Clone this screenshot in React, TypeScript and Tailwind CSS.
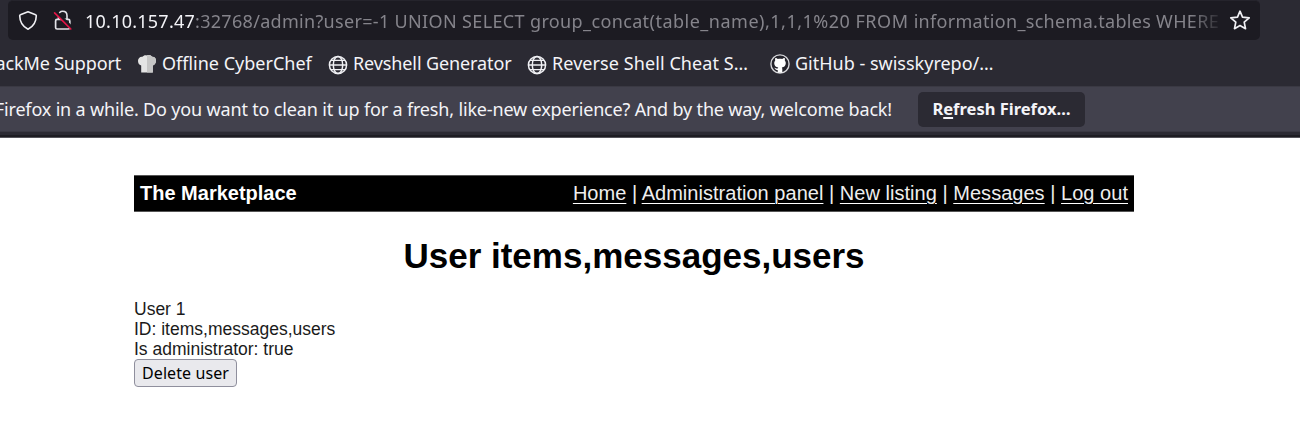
import type { ReactNode } from "react";

function Shield() {
  return (
    <svg className="size-[22px]" viewBox="0 0 22 22" fill="none" stroke="#f0f0f4" strokeWidth="1.6" strokeLinejoin="round">
      <path d="M11 1.800 L18.600 4.700 C19.200 4.900 19.300 5.300 19.300 5.800 C19.200 11.800 16.500 16.500 11 19.300 C5.500 16.500 2.800 11.800 2.700 5.800 C2.700 5.300 2.800 4.900 3.400 4.700 Z" />
    </svg>
  );
}

function BrokenLock() {
  return (
    <svg className="size-[22px]" viewBox="0 0 22 22" fill="none">
      <path d="M6.500 9V5.800C6.500 3.100 8.200 1.300 10.700 1.300S15 3.100 15 5.800V9" stroke="#e3e3e8" strokeWidth="1.600" />
      <rect x="3.600" y="9.400" width="14.200" height="9.600" rx="1.500" stroke="#e3e3e8" strokeWidth="1.700" />
      <path d="M4.200 2.200L20 18" stroke="#1c1b22" strokeWidth="3.200" />
      <path d="M2.600 2.800L18.800 19" stroke="#e31547" strokeWidth="1.700" strokeLinecap="round" />
    </svg>
  );
}

function Star() {
  return (
    <svg className="size-[22px]" viewBox="0 0 22 22" fill="none" stroke="#f0f0f4" strokeWidth="1.700" strokeLinejoin="round">
      <path d="M11 1.200L13.500 7.100L20.200 7.800L15.200 12.200L16.500 18.700L11 15.600L5.500 18.700L6.800 12.200L1.800 7.800L8.500 7.100Z" />
    </svg>
  );
}

function Globe() {
  return (
    <svg className="mt-[2px] size-5 shrink-0" viewBox="0 0 20 20" fill="none" stroke="#f0f0f4" strokeWidth="1.500">
      <circle cx="10" cy="10" r="8.600" />
      <ellipse cx="10" cy="10" rx="4.700" ry="8.600" />
      <path d="M1.400 10H18.600M3 5.400H17M3 14.600H17" strokeWidth="1.300" />
    </svg>
  );
}

function ChefHat() {
  return (
    <svg className="size-5 shrink-0" viewBox="0 0 20 20">
      <path d="M4.200 18.500V11.500C1.800 10.800 1 9 1 6.800C1 4.200 3 2.400 5.400 2.700C6.500 1.200 8.300.8 10 1.400C12 .6 14 1.200 15 2.700C17.400 2.500 19 4.200 19 6.600C19 9 18 10.800 15.800 11.500V18.500Z" fill="#e4e4e4" />
      <path d="M10 1.400C12 .6 14 1.200 15 2.700C17.400 2.500 19 4.200 19 6.600C19 9 18 10.800 15.800 11.500V18.500H10Z" fill="#c6c6c6" />
    </svg>
  );
}

function GitHubMark() {
  return (
    <svg className="mt-px size-5 shrink-0" viewBox="0 0 20 20">
      <circle cx="10" cy="10" r="9.100" fill="#24232b" stroke="#d6d6da" strokeWidth="1.400" />
      <path d="M7.700 18.800V15.900C5.700 16.300 5.200 15 4.700 14.300L4.200 13.800C5.400 13.500 6 14.900 7.800 14.500L8.200 13.500C5.800 13.200 4.200 12 4.200 9.100C4.200 8 4.600 7.100 5.200 6.400C5 5.600 5 4.700 5.300 4C6.300 4 7.200 4.600 7.900 5.100C9.300 4.700 10.700 4.700 12.100 5.100C12.800 4.600 13.700 4 14.700 4C15 4.700 15 5.600 14.800 6.400C15.400 7.100 15.800 8 15.800 9.100C15.800 12 14.200 13.200 11.800 13.500C12.200 14 12.300 14.500 12.300 15.200V18.800Z" fill="#fff" />
    </svg>
  );
}

function Bookmark({ icon, children }: { icon: ReactNode; children: ReactNode }) {
  return (
    <div className="flex items-center gap-[5px]">
      {icon}
      {children}
    </div>
  );
}

const links = ["Home", "Administration panel", "New listing", "Messages", "Log out"];

export default function App() {
  return (
    <div className="h-[441px] w-[1300px] overflow-hidden bg-white font-['Liberation_Sans',Arial,sans-serif] text-black">
      <header className="flex h-[138px] flex-col overflow-hidden border-b border-[#55545b] bg-[#2b2a33] font-['Noto_Sans',sans-serif] text-[18px] whitespace-pre text-[#f4f4f8]">
        <div className="flex h-[41px] shrink-0 pl-2">
          <div className="flex h-[40px] w-[1252px] items-center rounded-[5px] border-t border-[#25242c] bg-[#1c1b22] pl-[9px]">
            <Shield />
            <div className="ml-[13px] flex">
              <BrokenLock />
            </div>
            <div className="ml-[11px] flex w-[1135px] overflow-hidden mask-r-from-[1105px] mask-r-to-[1140px] leading-7">
              <span className="tracking-[0.240px]">10.10.157.47</span>
              <span className="text-[#85848b]">
                <span className="tracking-[0.310px]">:32768/admin?user=-1 </span>
                <span className="tracking-[0.364px]">UNION SELECT group_concat</span>
                <span className="tracking-[0.500px]">(table_name),1,1,1%20 FROM </span>
                <span className="tracking-[0.310px]">information_schema.tables WHERE</span>
              </span>
            </div>
            <div className="ml-[9px] flex">
              <Star />
            </div>
          </div>
        </div>

        <div className="flex h-[45px] shrink-0 items-center">
          <div className="flex w-[121px] justify-end tracking-[-0.160px]">ackMe Support</div>
          <div className="ml-4 w-[191px]">
            <Bookmark icon={<ChefHat />}>Offline CyberChef</Bookmark>
          </div>
          <div className="w-[199px] tracking-[-0.110px]">
            <Bookmark icon={<Globe />}>Revshell Generator</Bookmark>
          </div>
          <div className="w-[243px] tracking-[0.080px]">
            <Bookmark icon={<Globe />}>Reverse Shell Cheat S…</Bookmark>
          </div>
          <Bookmark icon={<GitHubMark />}>GitHub - swisskyrepo/…</Bookmark>
        </div>

        <div className="flex h-[46px] shrink-0 items-center border-y border-[#3a3943] bg-[#42414d]">
          <div className="flex w-[892px] justify-end pt-px tracking-[-0.164px]">
            Firefox in a while. Do you want to clean it up for a fresh, like-new experience? And by the way, welcome back!
          </div>
          <button className="ml-[26px] flex h-[35px] w-[167px] items-center justify-center rounded-[5px] bg-[#2b2a33] pt-px text-[16.500px] font-bold">
            R<span className="underline decoration-2 underline-offset-2">e</span>fresh Firefox…
          </button>
        </div>
        <div className="mt-[3px] h-[2px] bg-[#1d1c22]" />
      </header>

      <main className="mt-[37px] ml-[134px] w-[1000px]">
        <nav className="flex h-[37px] items-center justify-between border-y border-[#555] bg-black px-[6px] pb-[2px] text-[20px] text-white">
          <b>The Marketplace</b>
          <div className="flex whitespace-pre text-[#eee] tracking-[0.028px]">
            {links.map((label, i) => (
              <span key={label}>
                {i > 0 && " | "}
                <a className="underline decoration-white decoration-1 underline-offset-[3px]">{label}</a>
              </span>
            ))}
          </div>
        </nav>
        <h1 className="mt-[23px] text-center text-[35px] leading-[42px] font-bold">User items,messages,users</h1>
        <div className="mt-[22px] text-[17.500px] leading-5 text-[#1a1a1a]">
          <p>User 1</p>
          <p>ID: items,messages,users</p>
          <p>Is administrator: true</p>
        </div>
        <button className="flex h-[28px] w-[103px] items-center justify-center rounded-[4px] border border-[#8f8f9d] bg-[#e9e9ed] font-['Noto_Sans',sans-serif] text-[16px] tracking-[0.090px] text-black">
          Delete user
        </button>
      </main>
    </div>
  );
}
